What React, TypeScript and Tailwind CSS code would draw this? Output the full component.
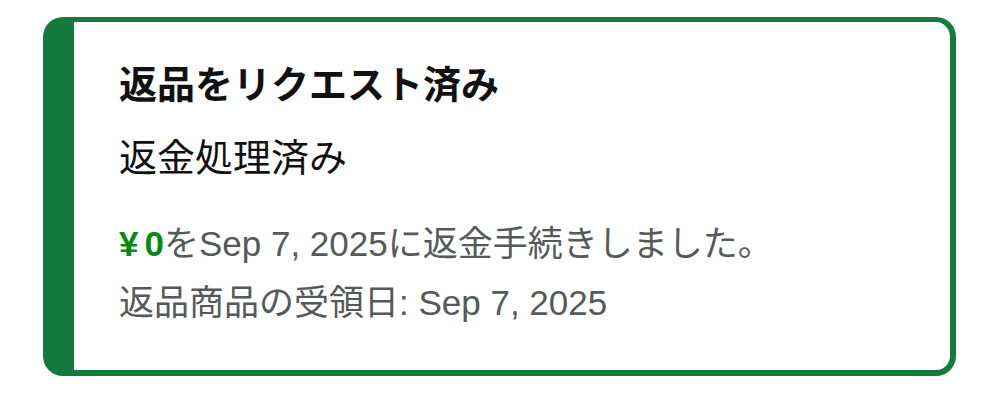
export default function App() {
  return (
    <div className="min-h-screen bg-white pt-[17px] pl-[43px]">
      <section className="w-[913px] h-[359px] rounded-[20px] border-[#127b3d] border-l-[31px] border-t-[5px] border-r-[6px] border-b-[6px] bg-white pl-[45px] pt-[36px] font-['Noto_Sans_CJK_JP',sans-serif]">
        <h2 className="text-[38px] leading-[48px] font-bold text-[#111111]">返品をリクエスト済み</h2>
        <p className="mt-[25px] text-[38px] leading-[48px] text-[#111111]">返金処理済み</p>
        <p className="mt-[43px] text-[35px] leading-[44px] text-[#565959] font-['Liberation_Sans','Noto_Sans_CJK_JP',sans-serif]">
          <span className="font-bold text-[#078a12]">
            <span className="mr-[6px]">¥</span>0
          </span>
          をSep 7, 2025に返金手続きしました。
        </p>
        <p className="mt-[15px] text-[35px] leading-[44px] text-[#565959] font-['Liberation_Sans','Noto_Sans_CJK_JP',sans-serif]">
          返品商品の受領日: Sep 7, 2025
        </p>
      </section>
    </div>
  )
}
